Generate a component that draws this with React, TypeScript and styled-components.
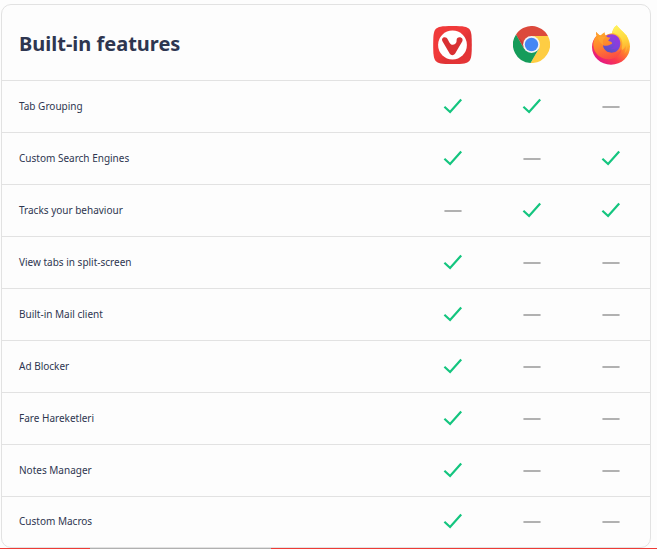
import React from "react";
import styled, { createGlobalStyle } from "styled-components";

const GlobalStyle = createGlobalStyle`
  *, *::before, *::after { box-sizing: border-box; }
  body {
    margin: 0;
    background: #fdfdfd;
    color: #2e3650;
    font-family: "Noto Sans", "Open Sans", sans-serif;
  }
`;

const Page = styled.main`
  padding-top: 4px;
`;

const Card = styled.section`
  margin: 0 6px 0 1px;
  border: 1px solid #e2e2e2;
  border-radius: 10px;
`;

const Table = styled.table`
  width: 100%;
  table-layout: fixed;
  border-collapse: separate;
  border-spacing: 0;
`;

const HeadCell = styled.th`
  height: 76px;
  padding: 4px 0 0;
  border-bottom: 1px solid #e2e2e2;
  line-height: 0;
  &:not(:first-child) { width: 79px; }
`;

const TitleCell = styled(HeadCell)`
  padding: 2px 0 0 17px;
  font-size: 20px;
  line-height: 28px;
  font-weight: 700;
  text-align: left;
`;

const Row = styled.tr`
  height: 52px;
  & > * { border-bottom: 1px solid #e2e2e2; }
  &:last-child { height: 50px; }
  &:last-child > * { border-bottom: 0; }
`;

const Feature = styled.th`
  padding: 0 0 2px 17px;
  font-size: 10px;
  line-height: 16px;
  font-weight: 400;
  text-align: left;
`;

const Cell = styled.td`
  padding: 0 0 2px;
  text-align: center;
  line-height: 0;
`;

const Strip = styled.div`
  display: flex;
  height: 1px;
  padding-left: 90px;
  background: #ee3b36;
`;

const StripSegment = styled.span`
  width: 32%;
  background: #b0b0b0;
`;

const Check = () => (
  <svg width="20" height="18" viewBox="0 0 20 18" role="img" aria-label="Yes">
    <path d="M1.4 9.7L7.1 15L18.2 2.4" fill="none" stroke="#14c57f" strokeWidth="2.2" />
  </svg>
);

const Dash = () => (
  <svg width="20" height="18" viewBox="0 0 20 18" role="img" aria-label="No">
    <path d="M2.2 10H17.8" fill="none" stroke="#b1b1b1" strokeWidth="2" strokeLinecap="round" />
  </svg>
);

const Vivaldi = () => (
  <svg width="39" height="38" viewBox="0 0 39 38" role="img" aria-label="Vivaldi">
    <defs>
      <linearGradient id="viv" x1="0" y1="0" x2="1" y2="1">
        <stop offset="0.45" stopColor="#f03a3a" />
        <stop offset="0.6" stopColor="#e03335" />
        <stop offset="1" stopColor="#e63537" />
      </linearGradient>
    </defs>
    <path
      d="M19.5 0C31 0 34 .8 36.3 3.1C38.3 5.4 38.8 9 38.8 19S38.3 32.6 36.3 34.9C34 37.2 31 38 19.5 38S5 37.2 2.7 34.9C.7 32.6 .2 29 .2 19S.7 5.4 2.7 3.1C5 .8 8 0 19.5 0Z"
      fill="url(#viv)"
    />
    <circle cx="19.5" cy="19" r="14.4" fill="#fff" />
    <path
      d="M9.6 15.5C8.2 13 9.7 11.3 11.7 11.3C13.2 11.3 14 12.1 14.8 13.6L16.4 16.4C17.4 18.1 18.5 18.8 20 18.7C22.5 18.5 23.8 16.7 23.6 14.2C23.5 12.3 24.8 11.2 26.5 11.2C29 11.2 30.4 13.4 29.2 15.6L22 27.7C20.7 29.6 18 29.6 16.8 27.7Z"
      fill="#d93033"
    />
  </svg>
);

const Chrome = () => (
  <svg width="37" height="37" viewBox="0 0 48 48" role="img" aria-label="Chrome">
    <path d="M3.9 10.9A24 24 0 0 1 45.4 13.1H24V24L14.5 29.5Z" fill="#dc493c" />
    <path d="M45.4 13.1A24 24 0 0 1 22.8 48L33.5 29.5L24 24V13.1Z" fill="#fecd43" />
    <path d="M22.8 48A24 24 0 0 1 3.9 10.9L14.5 29.5L24 24L33.5 29.5Z" fill="#159c5a" />
    <path d="M14.5 29.5L3.9 10.9L15 23Z" fill="#b93a31" opacity="0.6" />
    <circle cx="24" cy="24" r="10.9" fill="#f3f3f3" />
    <circle cx="24" cy="24" r="8.7" fill="#4486f4" />
  </svg>
);

const Firefox = () => (
  <svg width="40" height="40" viewBox="0 0 40 40" role="img" aria-label="Firefox">
    <defs>
      <linearGradient id="fxBody" x1="0.85" y1="0.1" x2="0.2" y2="0.95">
        <stop offset="0.05" stopColor="#fff14f" />
        <stop offset="0.25" stopColor="#ffb52e" />
        <stop offset="0.45" stopColor="#ff7a30" />
        <stop offset="0.7" stopColor="#fb3b4d" />
        <stop offset="1" stopColor="#e31587" />
      </linearGradient>
      <linearGradient id="fxGlobe" x1="0.8" y1="0" x2="0.3" y2="1">
        <stop offset="0" stopColor="#a238e0" />
        <stop offset="0.6" stopColor="#7548d8" />
        <stop offset="1" stopColor="#5753bb" />
      </linearGradient>
      <linearGradient id="fxHead" x1="0.3" y1="0" x2="0.6" y2="1">
        <stop offset="0" stopColor="#ffa92a" />
        <stop offset="0.45" stopColor="#ff862d" />
        <stop offset="1" stopColor="#fb4a45" />
      </linearGradient>
      <linearGradient id="fxFlame" x1="0.5" y1="0" x2="0.7" y2="1">
        <stop offset="0" stopColor="#fff15a" />
        <stop offset="0.5" stopColor="#ffd83e" />
        <stop offset="1" stopColor="#ffa52d" />
      </linearGradient>
    </defs>
    <path
      d="M5.3 6.7C5 8.6 5.2 9.7 5.8 10.5C3 13.4 1 17 1 22C1 32 9.5 39.7 20 39.7S39 32 39 21.5C39 17.5 37.5 13.5 35.5 10.5C33.8 8.2 29.5 5 25.7 .2C22.5 2.3 21.4 5.9 21.2 8.3C19 8.4 16.5 9.2 14.8 10.6C13.4 10.2 10.8 10 9.4 10.5C7.5 9.8 6 8.3 5.3 6.7Z"
      fill="url(#fxBody)"
    />
    <path
      d="M25.7 .2C22.8 2.4 21.3 5.5 21.2 8.3C25 8.2 28.7 10.6 30.3 14.1C32.1 18.1 31.5 22.5 29.5 25.5C32.5 25 34.2 22.5 34.7 20.5C35.1 23.5 34.5 26.5 33.2 28.5C37 26 38.5 17 35.5 10.5C33.8 8.2 29.5 5 25.7 .2Z"
      fill="url(#fxFlame)"
    />
    <path
      d="M14.5 11.6C18.5 8 24.3 8.6 27.1 12C30.7 16.5 29.9 23.5 25.5 26.3C20.8 29.2 13.6 27.6 11.8 22.3C10.6 18.1 11.3 14.3 14.5 11.6Z"
      fill="url(#fxGlobe)"
    />
    <path d="M22.5 11C27 11.5 29.3 15.5 28 19.5C26.5 23.5 22.7 24.8 19 23.9C24.4 22.5 26.4 16.3 22.5 11Z" fill="#9038df" opacity="0.6" />
    <path
      d="M5.3 6.7C5 8.6 5.2 9.7 5.8 10.5C3.6 13.1 2.2 16.4 2.3 20C2.8 29 10 34.5 18.5 34.2C26 33.8 30.7 28.6 30.8 23C28.8 27.6 23.2 29.3 18.5 27.6C14.4 26.4 12.2 23 12 20.2C14.4 21.3 17 20.9 18.9 19.8C20.4 19 21.4 19 21 17.8C20.4 16.5 18.4 16.7 17.4 15.8C16.9 14.9 18.8 14 19.5 12.4C17.1 12.3 16.1 12 15.1 10.9C14 9.8 13.7 8.4 13.7 7.2C12.1 8.1 10.7 9.1 9.8 10.5C7.7 10 6.1 8.4 5.3 6.7Z"
      fill="url(#fxHead)"
    />
    <path d="M6.7 12.5C9.1 10.5 12.3 11.8 14.6 12.6C12.2 13.6 11.1 16.2 12.5 20.2C9 18 7.4 15.2 6.7 12.5Z" fill="#ffad35" opacity="0.55" />
  </svg>
);

const features: [string, boolean, boolean, boolean][] = [
  ["Tab Grouping", true, true, false],
  ["Custom Search Engines", true, false, true],
  ["Tracks your behaviour", false, true, true],
  ["View tabs in split-screen", true, false, false],
  ["Built-in Mail client", true, false, false],
  ["Ad Blocker", true, false, false],
  ["Fare Hareketleri", true, false, false],
  ["Notes Manager", true, false, false],
  ["Custom Macros", true, false, false],
];

export default function App() {
  return (
    <>
      <GlobalStyle />
      <Page>
        <Card>
          <Table>
            <thead>
              <tr>
                <TitleCell scope="col">Built-in features</TitleCell>
                <HeadCell scope="col"><Vivaldi /></HeadCell>
                <HeadCell scope="col"><Chrome /></HeadCell>
                <HeadCell scope="col"><Firefox /></HeadCell>
              </tr>
            </thead>
            <tbody>
              {features.map(([name, ...support]) => (
                <Row key={name}>
                  <Feature scope="row">{name}</Feature>
                  {support.map((yes, i) => (
                    <Cell key={i}>{yes ? <Check /> : <Dash />}</Cell>
                  ))}
                </Row>
              ))}
            </tbody>
          </Table>
        </Card>
        <Strip>
          <StripSegment />
        </Strip>
      </Page>
    </>
  );
}
